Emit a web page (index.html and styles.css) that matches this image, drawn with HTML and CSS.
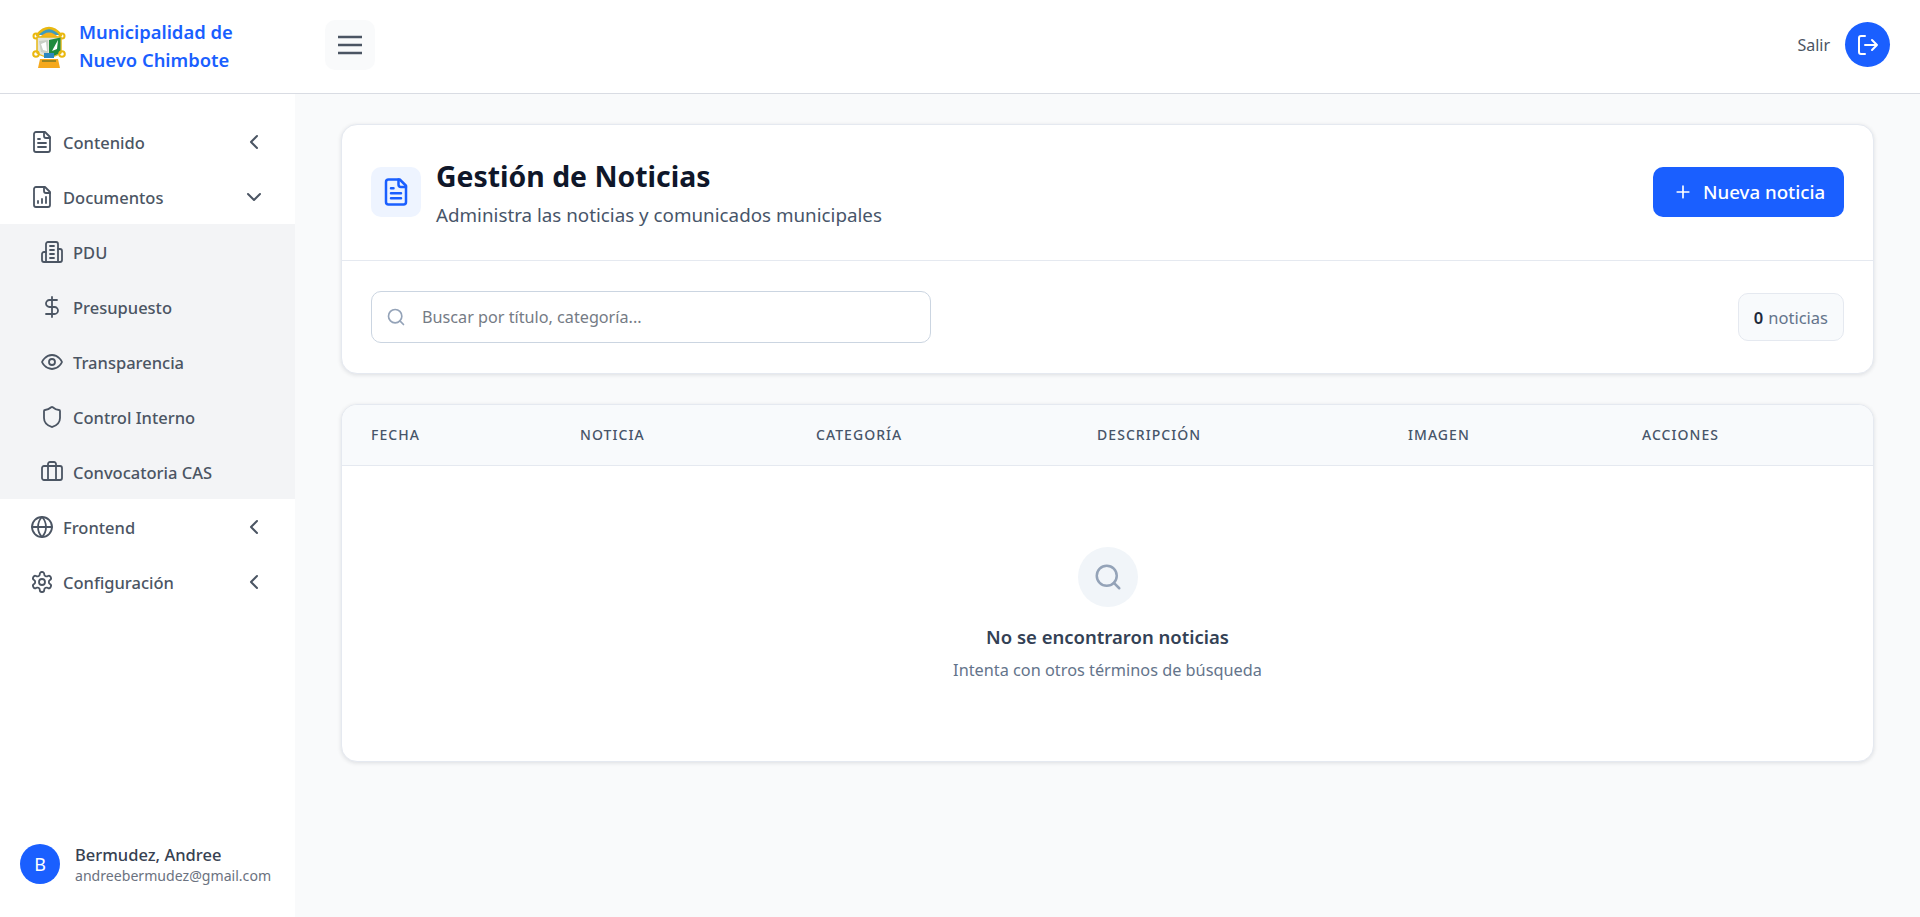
FILE: index.html
```html
<!DOCTYPE html>
<html lang="es">
<head>
<meta charset="utf-8">
<title>Gestión de Noticias</title>
<link rel="stylesheet" href="styles.css">
</head>
<body>
<header class="topbar">
  <div class="brand">
    <svg class="brand-logo" viewBox="0 0 34 44">
      <path d="M5 11 Q17 -3 29 11" fill="#3d9cc0" stroke="#eab80f" stroke-width="2.500"/>
      <path d="M7 14 Q17 3 27 14Z" fill="#f7b21b"/>
      <circle cx="4" cy="12" r="2.500" fill="none" stroke="#eab80f" stroke-width="2"/>
      <circle cx="30" cy="12" r="2.500" fill="none" stroke="#eab80f" stroke-width="2"/>
      <path d="M5 13 H29 V29 Q17 37 5 29Z" fill="#e4e4da" stroke="#e6b815" stroke-width="1.500"/>
      <path d="M17 16 L28.500 13.500 V29 L17 34Z" fill="#1f8a3c"/>
      <path d="M7 17 L16 16 V30 L9 28Z" fill="#c9cfc6"/>
      <path d="M9 20 L14 18 L15 27 L11 26Z" fill="#fff"/>
      <path d="M20 27 L26 16 L25 25Z" fill="#fff"/>
      <circle cx="4" cy="30" r="2.800" fill="none" stroke="#eab80f" stroke-width="2"/>
      <circle cx="30" cy="30" r="2.800" fill="none" stroke="#eab80f" stroke-width="2"/>
      <rect x="12" y="29" width="10" height="5" fill="#2b86c0"/>
      <path d="M8 35 H26 L28 44 H6Z" fill="#f6a81c"/>
      <rect x="10" y="36" width="14" height="2" fill="#9a8420"/>
    </svg>
    <div class="brand-name">Municipalidad de<br>Nuevo Chimbote</div>
  </div>
  <button class="menu-btn">
    <svg viewBox="0 0 24 24" class="icon-menu"><path d="M0 4h24M0 12h24M0 20h24"/></svg>
  </button>
  <div class="logout">
    <span>Salir</span>
    <div class="logout-btn">
      <svg viewBox="0 0 24 24"><path d="M9 21H5a2 2 0 0 1-2-2V5a2 2 0 0 1 2-2h4"/><path d="M16 17l5-5-5-5M21 12H9"/></svg>
    </div>
  </div>
</header>

<div class="layout">
  <aside class="sidebar">
    <nav class="nav">
      <a class="nav-item">
        <svg class="nav-icon" viewBox="0 0 24 24"><path d="M15 2H6a2 2 0 0 0-2 2v16a2 2 0 0 0 2 2h12a2 2 0 0 0 2-2V7Z"/><path d="M14 2v4a2 2 0 0 0 2 2h4M10 9H8M16 13H8M16 17H8"/></svg>
        <span>Contenido</span>
        <svg class="chevron" viewBox="0 0 24 24"><path d="M15 18l-6-6 6-6"/></svg>
      </a>
      <a class="nav-item">
        <svg class="nav-icon" viewBox="0 0 24 24"><path d="M15 2H6a2 2 0 0 0-2 2v16a2 2 0 0 0 2 2h12a2 2 0 0 0 2-2V7Z"/><path d="M14 2v4a2 2 0 0 0 2 2h4M8 18v-2M12 18v-4M16 18v-6"/></svg>
        <span>Documentos</span>
        <svg class="chevron" viewBox="0 0 24 24"><path d="M6 9l6 6 6-6"/></svg>
      </a>
      <div class="subnav">
        <a class="nav-item">
          <svg class="nav-icon" viewBox="0 0 24 24"><path d="M6 22V4a2 2 0 0 1 2-2h8a2 2 0 0 1 2 2v18Z"/><path d="M6 12H4a2 2 0 0 0-2 2v6a2 2 0 0 0 2 2h2M18 9h2a2 2 0 0 1 2 2v9a2 2 0 0 1-2 2h-2M10 6h4M10 10h4M10 14h4M10 18h4"/></svg>
          <span>PDU</span>
        </a>
        <a class="nav-item">
          <svg class="nav-icon" viewBox="0 0 24 24"><path d="M12 2v20M17 5H9.500a3.500 3.500 0 0 0 0 7h5a3.500 3.500 0 0 1 0 7H6"/></svg>
          <span>Presupuesto</span>
        </a>
        <a class="nav-item">
          <svg class="nav-icon" viewBox="0 0 24 24"><path d="M2 12s3-7 10-7 10 7 10 7-3 7-10 7-10-7-10-7Z"/><circle cx="12" cy="12" r="3"/></svg>
          <span>Transparencia</span>
        </a>
        <a class="nav-item">
          <svg class="nav-icon" viewBox="0 0 24 24"><path d="M20 13c0 5-3.500 7.500-7.660 8.950a1 1 0 0 1-.67-.01C7.500 20.500 4 18 4 13V6a1 1 0 0 1 1-1c2 0 4.500-1.200 6.240-2.720a1.170 1.170 0 0 1 1.520 0C14.510 3.810 17 5 19 5a1 1 0 0 1 1 1z"/></svg>
          <span>Control Interno</span>
        </a>
        <a class="nav-item">
          <svg class="nav-icon" viewBox="0 0 24 24"><path d="M16 20V4a2 2 0 0 0-2-2h-4a2 2 0 0 0-2 2v16"/><rect x="2" y="6" width="20" height="14" rx="2"/></svg>
          <span>Convocatoria CAS</span>
        </a>
      </div>
      <a class="nav-item">
        <svg class="nav-icon" viewBox="0 0 24 24"><circle cx="12" cy="12" r="10"/><path d="M2 12h20M12 2a14.500 14.500 0 0 0 0 20 14.500 14.500 0 0 0 0-20"/></svg>
        <span>Frontend</span>
        <svg class="chevron" viewBox="0 0 24 24"><path d="M15 18l-6-6 6-6"/></svg>
      </a>
      <a class="nav-item">
        <svg class="nav-icon" viewBox="0 0 24 24"><path d="M12.220 2h-.44a2 2 0 0 0-2 2v.18a2 2 0 0 1-1 1.730l-.43.25a2 2 0 0 1-2 0l-.15-.08a2 2 0 0 0-2.730.73l-.22.38a2 2 0 0 0 .73 2.730l.15.1a2 2 0 0 1 1 1.720v.51a2 2 0 0 1-1 1.740l-.15.09a2 2 0 0 0-.73 2.730l.22.38a2 2 0 0 0 2.730.73l.15-.08a2 2 0 0 1 2 0l.43.25a2 2 0 0 1 1 1.730V20a2 2 0 0 0 2 2h.44a2 2 0 0 0 2-2v-.18a2 2 0 0 1 1-1.730l.43-.25a2 2 0 0 1 2 0l.15.08a2 2 0 0 0 2.730-.73l.22-.39a2 2 0 0 0-.73-2.730l-.15-.08a2 2 0 0 1-1-1.740v-.5a2 2 0 0 1 1-1.740l.15-.09a2 2 0 0 0 .73-2.730l-.22-.38a2 2 0 0 0-2.730-.73l-.15.08a2 2 0 0 1-2 0l-.43-.25a2 2 0 0 1-1-1.730V4a2 2 0 0 0-2-2z"/><circle cx="12" cy="12" r="3"/></svg>
        <span>Configuración</span>
        <svg class="chevron" viewBox="0 0 24 24"><path d="M15 18l-6-6 6-6"/></svg>
      </a>
    </nav>
    <div class="user">
      <div class="avatar">B</div>
      <div class="user-info">
        <div class="user-name">Bermudez, Andree</div>
        <div class="user-mail">andreebermudez@gmail.com</div>
      </div>
    </div>
  </aside>

  <main class="main">
    <section class="card">
      <div class="card-head">
        <div class="head-icon">
          <svg viewBox="0 0 24 24"><path d="M15 2H6a2 2 0 0 0-2 2v16a2 2 0 0 0 2 2h12a2 2 0 0 0 2-2V7Z"/><path d="M14 2v4a2 2 0 0 0 2 2h4M10 9H8M16 13H8M16 17H8"/></svg>
        </div>
        <div class="head-text">
          <h1>Gestión de Noticias</h1>
          <p>Administra las noticias y comunicados municipales</p>
        </div>
        <button class="btn-new">
          <svg viewBox="0 0 24 24"><path d="M5 12h14M12 5v14"/></svg>
          Nueva noticia
        </button>
      </div>
      <div class="card-tools">
        <div class="search">
          <svg viewBox="0 0 24 24"><circle cx="11" cy="11" r="8"/><path d="M21 21l-4.300-4.300"/></svg>
          <span>Buscar por título, categoría...</span>
        </div>
        <div class="count"><b>0</b> noticias</div>
      </div>
    </section>

    <section class="card table-card">
      <table class="news">
        <colgroup>
          <col class="c-fecha"><col class="c-noticia"><col class="c-cat"><col class="c-desc"><col class="c-img"><col>
        </colgroup>
        <thead>
          <tr>
            <th>FECHA</th><th>NOTICIA</th><th>CATEGORÍA</th><th>DESCRIPCIÓN</th><th>IMAGEN</th><th>ACCIONES</th>
          </tr>
        </thead>
      </table>
      <div class="empty">
        <div class="empty-icon">
          <svg viewBox="0 0 24 24"><circle cx="11" cy="11" r="8"/><path d="M21 21l-4.300-4.300"/></svg>
        </div>
        <h3>No se encontraron noticias</h3>
        <p>Intenta con otros términos de búsqueda</p>
      </div>
    </section>
  </main>
</div>
</body>
</html>
```

FILE: styles.css
```css
* { box-sizing: border-box; }
html, body { margin: 0; padding: 0; height: 100%; }
body { font-family: "Noto Sans", "Liberation Sans", sans-serif; font-size: 16px; color: #475569; background: #f9fafb; }
svg { fill: none; stroke: currentColor; stroke-width: 2; stroke-linecap: round; stroke-linejoin: round; display: block; }

.topbar { height: 94px; background: #fff; border-bottom: 1px solid #d9dce3; display: flex; align-items: center; padding: 0 30px 4px 0; }
.brand { width: 325px; display: flex; align-items: center; padding: 2px 0 0 32px; }
.brand-logo { width: 34px; height: 44px; flex: none; margin-top: 1px; stroke: none; stroke-width: 0; }
.brand-name { margin-left: 13px; font-size: 18.400px; font-weight: 600; line-height: 28px; color: #1a5fff; white-space: nowrap; }
.menu-btn { width: 50px; height: 50px; border: 0; border-radius: 10px; background: #f9fafb; color: #4b5563; padding: 0; display: flex; align-items: center; justify-content: center; }
.icon-menu { width: 24px; height: 24px; stroke-width: 2.500; stroke-linecap: butt; }
.logout { margin-left: auto; display: flex; align-items: center; gap: 15px; font-size: 16px; color: #4b5563; }
.logout-btn { width: 45px; height: 45px; border-radius: 50%; background: #1a5fff; color: #fff; display: flex; align-items: center; justify-content: center; }
.logout-btn svg { width: 24px; height: 24px; }

.layout { display: flex; height: 823px; }
.sidebar { width: 295px; flex: none; background: #fff; display: flex; flex-direction: column; justify-content: space-between; }
.nav { padding-top: 20px; }
.nav-item { height: 55px; display: flex; align-items: center; padding: 0 29px 0 30px; font-size: 16.500px; font-weight: 500; color: #4b5563; }
.nav-item span { margin: 2px 0 0 9px; flex: 1; white-space: nowrap; }
.nav-icon { width: 24px; height: 24px; flex: none; stroke-width: 1.800; }
.chevron { width: 24px; height: 24px; flex: none; }
.subnav { background: #f3f4f6; }
.subnav .nav-item { padding-left: 40px; }

.user { display: flex; align-items: flex-start; padding: 0 20px 33px; gap: 15px; }
.avatar { width: 40px; height: 40px; border-radius: 50%; background: #1a5fff; color: #fff; display: flex; align-items: center; justify-content: center; font-size: 18px; flex: none; }
.user-info { height: 40px; }
.user-name { font-size: 16.500px; font-weight: 500; line-height: 22px; color: #374151; }
.user-mail { font-size: 14.100px; line-height: 20px; color: #6b7280; white-space: nowrap; }

.main { flex: 1; padding: 30px 46px 0; }
.card { background: #fff; border: 1px solid #e5e9f0; border-radius: 16px; box-shadow: 0 1px 4px rgba(15, 23, 42, .12); }
.card-head { height: 136px; display: flex; align-items: center; padding: 0 29px 2px; border-bottom: 1px solid #e5e9f0; }
.head-icon { width: 50px; height: 50px; border-radius: 10px; background: #eef4ff; color: #1a5fff; display: flex; align-items: center; justify-content: center; }
.head-icon svg { width: 30px; height: 30px; }
.head-text { margin: 2px 0 0 15px; flex: 1; }
h1 { margin: 0; font-size: 28.400px; line-height: 40px; font-weight: 700; color: #0f172a; }
.head-text p { margin: 4px 0 0; font-size: 18.800px; line-height: 30px; color: #475569; }
.btn-new { width: 191px; height: 50px; padding: 0 0 0 20px; border: 0; border-radius: 10px; background: #1a5fff; color: #fff; font: 500 18.700px "Noto Sans", sans-serif; display: flex; align-items: center; gap: 10px; }
.btn-new svg { width: 20px; height: 20px; }
.card-tools { height: 112px; display: flex; align-items: center; justify-content: space-between; padding: 0 29px; }
.search { width: 560px; height: 52px; border: 1px solid #cbd5e1; border-radius: 10px; display: flex; align-items: center; padding-left: 14px; gap: 16px; color: #94a3b8; }
.search svg { width: 20px; height: 20px; flex: none; }
.search span { font-size: 16.200px; color: #757b85; }
.count { height: 48px; border: 1px solid #e5e9f0; border-radius: 10px; background: #f8fafc; padding: 0 15px; display: flex; align-items: center; gap: 5px; font-size: 16.500px; color: #64748b; }
.count b { color: #1e293b; font-weight: 600; }

.table-card { margin-top: 30px; overflow: hidden; }
.news { width: 100%; border-collapse: collapse; table-layout: fixed; }
.news th { height: 60px; padding: 0 0 0 29px; background: #f8fafc; border-bottom: 1px solid #e5e9f0; text-align: left; font-size: 14px; font-weight: 500; letter-spacing: 1.050px; color: #475569; }
.c-fecha { width: 209px; }
.c-noticia { width: 236px; }
.c-cat { width: 281px; }
.c-desc { width: 311px; }
.c-img { width: 234px; }
.empty { height: 295px; display: flex; flex-direction: column; align-items: center; padding-top: 81px; }
.empty-icon { width: 60px; height: 60px; border-radius: 50%; background: #f1f5f9; color: #94a3b8; display: flex; align-items: center; justify-content: center; }
.empty-icon svg { width: 30px; height: 30px; }
.empty h3 { margin: 16px 0 0; font-size: 18.500px; line-height: 28px; font-weight: 600; color: #334155; }
.empty p { margin: 7px 0 0; font-size: 16.300px; line-height: 24px; color: #64748b; }
```
